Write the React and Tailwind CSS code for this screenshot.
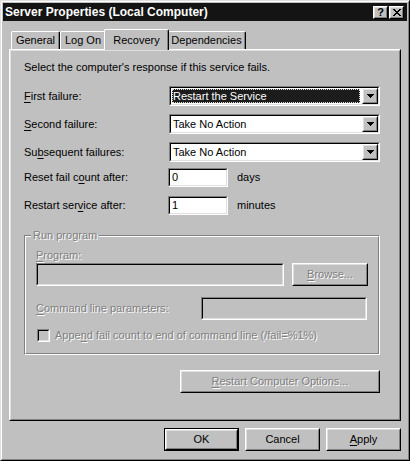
import React from "react";

const FONT = "font-['Liberation_Sans',Arial,sans-serif]";
const DIS = "text-[#808080] [text-shadow:1px_1px_0_#ffffff]";

function Sunken({ className = "", inner = "", children }) {
  return (
    <div className={`border border-t-[#808080] border-l-[#808080] border-b-white border-r-white ${className}`}>
      <div className={`h-full border border-t-black border-l-black border-b-[#dfdfdf] border-r-[#dfdfdf] ${inner}`}>
        {children}
      </div>
    </div>
  );
}

function Raised({ className = "", inner = "", children }) {
  return (
    <div className={`border border-t-white border-l-white border-b-black border-r-black ${className}`}>
      <div className={`h-full border border-t-[#dfdfdf] border-l-[#dfdfdf] border-b-[#808080] border-r-[#808080] ${inner}`}>
        {children}
      </div>
    </div>
  );
}

function Arrow() {
  return (
    <svg width="7" height="4" viewBox="0 0 7 4">
      <path d="M0 0h7v1h-1v1h-1v1h-1v1h-1v-1h-1v-1h-1v-1h-1z" fill="#000" />
    </svg>
  );
}

function Combo({ text, selected }) {
  return (
    <Sunken className="w-[211px] h-[20px]" inner="bg-white flex items-stretch">
      <div className="flex-1 flex items-center pl-[1px] pr-[2px] min-w-0">
        {selected ? (
          <div className="flex-1 h-[14px] bg-[#1c1c1c] text-white outline outline-1 outline-dotted outline-[#dddddd] -outline-offset-1 flex items-center pl-[1px] leading-[13px]">
            {text}
          </div>
        ) : (
          <span className="pl-[1px] leading-[13px]">{text}</span>
        )}
      </div>
      <Raised className="w-[16px] bg-[#c0c0c0]" inner="flex items-center justify-center">
        <Arrow />
      </Raised>
    </Sunken>
  );
}

function U({ children }) {
  return <span className="underline underline-offset-[2px]">{children}</span>;
}

function Tab({ label, w, selected }) {
  if (selected) {
    return (
      <div
        className={`${w} h-[21px] -mb-[1px] relative z-10 bg-[#c0c0c0] border-t border-l border-white border-r border-r-black rounded-tl-[2px] rounded-tr-[2px] shadow-[inset_-1px_0_0_#808080] flex items-start justify-center pt-[2px] -mx-[2px]`}
      >
        {label}
      </div>
    );
  }
  return (
    <div
      className={`${w} h-[18px] border-t border-l border-white border-r border-r-black rounded-tl-[2px] rounded-tr-[2px] shadow-[inset_-1px_0_0_#808080] flex items-center justify-center`}
    >
      {label}
    </div>
  );
}

function PushButton({ className = "", children, isDefault, textClass = "" }) {
  const core = (
    <Raised className="h-full" inner={`flex items-center justify-center ${textClass}`}>
      {children}
    </Raised>
  );
  if (isDefault) {
    return <div className={`border border-black ${className}`}>{core}</div>;
  }
  return <div className={className}>{core}</div>;
}

export default function App() {
  return (
    <div className={`w-[410px] h-[461px] bg-[#c0c0c0] text-[11px] text-black ${FONT} border border-t-[#dfdfdf] border-l-[#dfdfdf] border-b-black border-r-black`}>
      <div className="h-full border border-t-white border-l-white border-b-[#808080] border-r-[#808080] p-[1px] flex flex-col">
        {/* Title bar */}
        <div className="h-[18px] bg-[#141414] flex items-center pl-[2px] pr-[3px]">
          <div className="flex-1 text-white font-bold text-[12px] leading-[14px] whitespace-nowrap">
            Server Properties (Local Computer)
          </div>
          <Raised className="w-[15px] h-[13px] bg-[#c0c0c0]" inner="flex items-center justify-center font-bold text-[11px] leading-[10px]">
            ?
          </Raised>
          <Raised className="ml-[1px] w-[15px] h-[13px] bg-[#c0c0c0]" inner="flex items-center justify-center">
            <svg width="8" height="7" viewBox="0 0 8 7">
              <path d="M0 0h2v1h1v1h2v-1h1v-1h2v1h-1v1h-1v1h-1v1h1v1h1v1h1v1h-2v-1h-1v-1h-2v1h-1v1h-2v-1h1v-1h1v-1h1v-1h-1v-1h-1v-1h-1z" fill="#000" />
            </svg>
          </Raised>
        </div>

        <div className="px-[6px] flex flex-col">
          {/* Tabs */}
          <div className="mt-[8px] h-[20px] flex items-end pl-[2px]">
            <Tab label="General" w="w-[49px]" />
            <Tab label="Log On" w="w-[46px]" />
            <Tab label="Recovery" w="w-[65px]" selected />
            <Tab label="Dependencies" w="w-[79px]" />
          </div>

          {/* Panel */}
          <div className="h-[372px] border border-t-white border-l-white border-b-black border-r-black">
            <div className="h-full border border-t-[#dfdfdf] border-l-[#dfdfdf] border-b-[#808080] border-r-[#808080] pl-[13px] pt-[10px] flex flex-col">
              <div className="h-[13px] leading-[13px]">Select the computer's response if this service fails.</div>

              <div className="mt-[12px] flex flex-col gap-[8px]">
                <div className="flex items-center h-[20px]">
                  <div className="w-[145px]"><U>F</U>irst failure:</div>
                  <Combo text="Restart the Service" selected />
                </div>
                <div className="flex items-center h-[20px]">
                  <div className="w-[145px]"><U>S</U>econd failure:</div>
                  <Combo text="Take No Action" />
                </div>
                <div className="flex items-center h-[20px]">
                  <div className="w-[145px]">Su<U>b</U>sequent failures:</div>
                  <Combo text="Take No Action" />
                </div>
              </div>

              <div className="mt-[6px] flex flex-col gap-[9px]">
                <div className="flex items-center h-[19px]">
                  <div className="w-[144px]">Reset fail c<U>o</U>unt after:</div>
                  <Sunken className="w-[60px] h-[19px]" inner="bg-white flex items-center pl-[2px]">0</Sunken>
                  <div className="ml-[9px]">days</div>
                </div>
                <div className="flex items-center h-[19px]">
                  <div className="w-[144px]">Restart ser<U>v</U>ice after:</div>
                  <Sunken className="w-[60px] h-[19px]" inner="bg-white flex items-center pl-[2px]">1</Sunken>
                  <div className="ml-[9px]">minutes</div>
                </div>
              </div>

              {/* Group box */}
              <div className="relative mt-[20px] w-[356px] h-[120px] border border-t-[#808080] border-l-[#808080] border-b-white border-r-white">
                <div className={`absolute -top-[7px] left-[6px] px-[2px] bg-[#c0c0c0] leading-[13px] ${DIS}`}>
                  Run program
                </div>
                <div className="h-full border border-t-white border-l-white border-b-[#808080] border-r-[#808080] pl-[10px] pt-[12px] flex flex-col">
                  <div className={`leading-[13px] ${DIS}`}><U>P</U>rogram:</div>
                  <div className="mt-[1px] flex items-center gap-[8px]">
                    <Sunken className="w-[248px] h-[23px]" inner="bg-[#c0c0c0]" />
                    <PushButton className="w-[76px] h-[23px]" textClass={DIS}>
                      <span><U>B</U>rowse...</span>
                    </PushButton>
                  </div>
                  <div className="mt-[11px] flex items-center">
                    <div className={`w-[165px] ${DIS}`}><U>C</U>ommand line parameters:</div>
                    <Sunken className="w-[166px] h-[23px]" inner="bg-[#c0c0c0]" />
                  </div>
                  <div className="mt-[9px] flex items-center h-[13px]">
                    <Sunken className="ml-[1px] w-[13px] h-[13px]" inner="bg-[#c0c0c0]" />
                    <div className={`ml-[5px] leading-[13px] ${DIS}`}>
                      Appe<U>n</U>d fail count to end of command line (/fail=%1%)
                    </div>
                  </div>
                </div>
              </div>

              <PushButton className="mt-[15px] ml-[156px] w-[200px] h-[23px]" textClass={DIS}>
                <span><U>R</U>estart Computer Options...</span>
              </PushButton>
            </div>
          </div>

          {/* Bottom buttons */}
          <div className="mt-[7px] flex justify-end gap-[6px]">
            <PushButton className="w-[75px] h-[23px]" isDefault>OK</PushButton>
            <PushButton className="w-[75px] h-[23px]">Cancel</PushButton>
            <PushButton className="w-[75px] h-[23px]"><span><U>A</U>pply</span></PushButton>
          </div>
        </div>
      </div>
    </div>
  );
}
